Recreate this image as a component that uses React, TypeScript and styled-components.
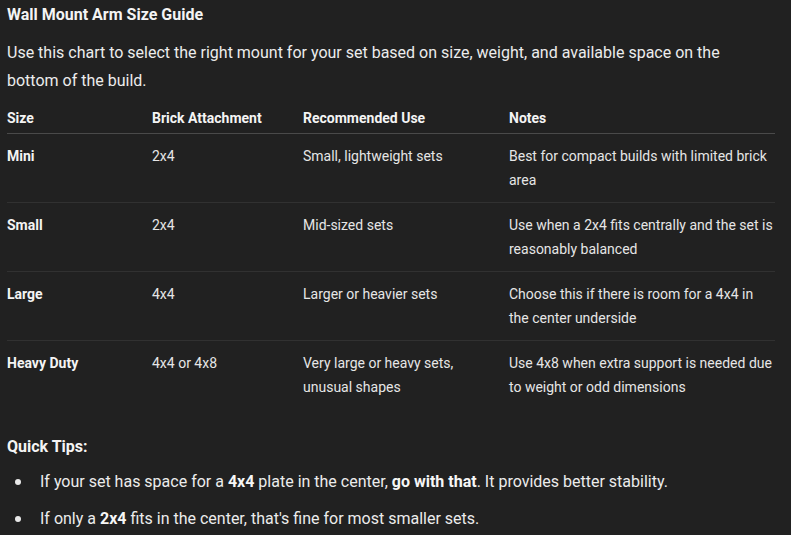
import React from "react";
import styled, { createGlobalStyle } from "styled-components";

const GlobalStyle = createGlobalStyle`
  html, body { margin: 0; padding: 0; background: #212121; }
  body { font-family: Roboto, "Liberation Sans", sans-serif; color: #ececec; }
`;

const Page = styled.div`
  padding: 3px 16px 0 7px;
`;

const Title = styled.h2`
  margin: 0;
  font-size: 16px;
  line-height: 24px;
  font-weight: 700;
  color: #f4f4f4;
`;

const Paragraph = styled.p`
  margin: 12px 0 0;
  font-size: 16px;
  line-height: 28px;
`;

const Table = styled.div`
  width: 768px;
  font-size: 14px;
  line-height: 24px;
`;

const Row = styled.div<{ $head?: boolean; $last?: boolean }>`
  display: grid;
  grid-template-columns: 133px 139px 194px 1fr;
  column-gap: 12px;
  padding: ${(p) => (p.$head ? "11px 0 3px" : "10px 0 10px")};
  border-bottom: ${(p) =>
    p.$last ? "none" : p.$head ? "1px solid #4a4a4a" : "1px solid #313131"};
`;

const Cell = styled.div<{ $strong?: boolean }>`
  font-weight: ${(p) => (p.$strong ? 700 : 400)};
  color: ${(p) => (p.$strong ? "#f4f4f4" : "#e6e6e6")};
`;

const SubHeading = styled.h3`
  margin: 26px 0 0;
  font-size: 16px;
  line-height: 24px;
  font-weight: 700;
  color: #f4f4f4;
`;

const List = styled.ul`
  margin: 9px 0 0;
  padding: 0;
  list-style: none;
`;

const Item = styled.li`
  position: relative;
  padding-left: 33px;
  font-size: 16px;
  line-height: 28px;
  margin-bottom: 9px;
  &::before {
    content: "";
    position: absolute;
    left: 8px;
    top: 11px;
    width: 6px;
    height: 6px;
    border-radius: 50%;
    background: #e8e8e8;
  }
  b { font-weight: 700; color: #f6f6f6; }
`;

const rows = [
  ["Mini", "2x4", "Small, lightweight sets", "Best for compact builds with limited brick area"],
  ["Small", "2x4", "Mid-sized sets", "Use when a 2x4 fits centrally and the set is reasonably balanced"],
  ["Large", "4x4", "Larger or heavier sets", "Choose this if there is room for a 4x4 in the center underside"],
  ["Heavy Duty", "4x4 or 4x8", "Very large or heavy sets, unusual shapes", "Use 4x8 when extra support is needed due to weight or odd dimensions"],
];

export default function App() {
  return (
    <>
      <GlobalStyle />
      <Page>
        <Title>Wall Mount Arm Size Guide</Title>
        <Paragraph>
          Use this chart to select the right mount for your set based on size, weight, and available space on the
          bottom of the build.
        </Paragraph>
        <Table>
          <Row $head>
            <Cell $strong>Size</Cell>
            <Cell $strong>Brick Attachment</Cell>
            <Cell $strong>Recommended Use</Cell>
            <Cell $strong>Notes</Cell>
          </Row>
          {rows.map((r, i) => (
            <Row key={r[0]} $last={i === rows.length - 1}>
              <Cell $strong>{r[0]}</Cell>
              <Cell>{r[1]}</Cell>
              <Cell>{r[2]}</Cell>
              <Cell>{r[3]}</Cell>
            </Row>
          ))}
        </Table>
        <SubHeading>Quick Tips:</SubHeading>
        <List>
          <Item>
            If your set has space for a <b>4x4</b> plate in the center, <b>go with that</b>. It provides better stability.
          </Item>
          <Item>
            If only a <b>2x4</b> fits in the center, that's fine for most smaller sets.
          </Item>
        </List>
      </Page>
    </>
  );
}
